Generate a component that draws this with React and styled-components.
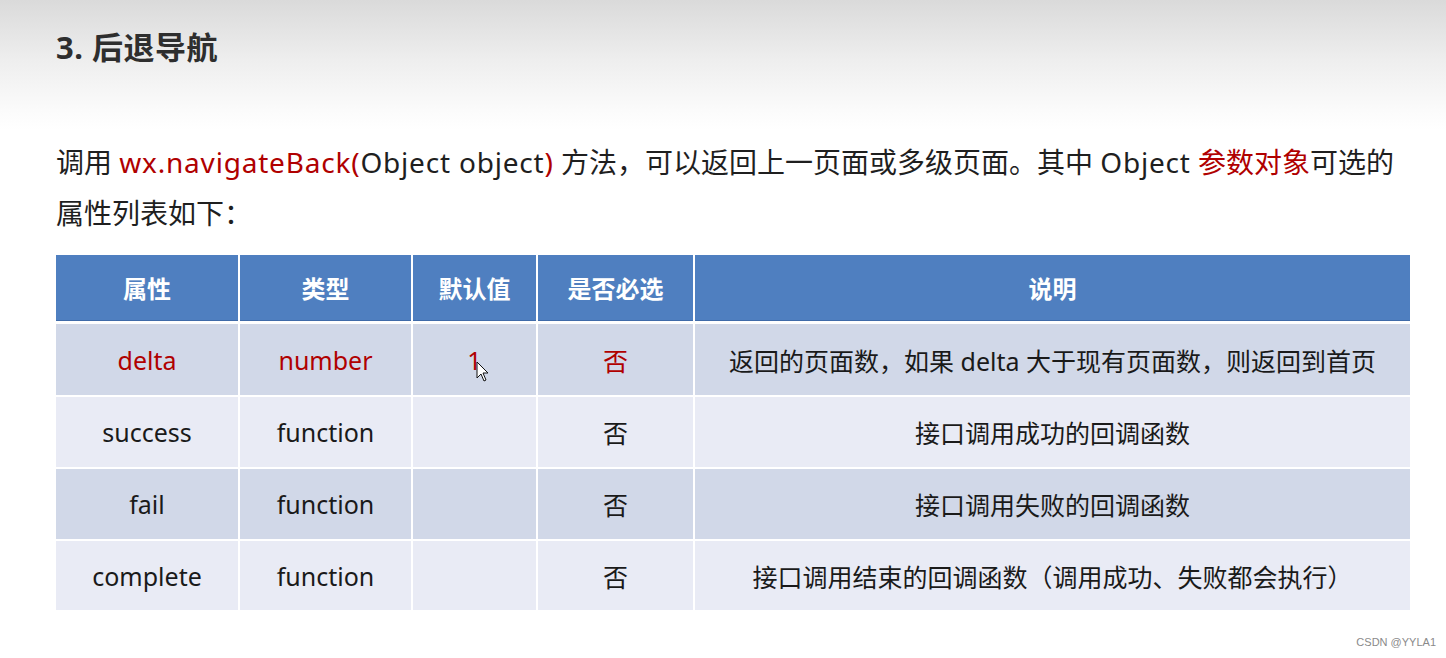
import React from "react";
import styled, { createGlobalStyle } from "styled-components";

const Global = createGlobalStyle`
  html, body { margin: 0; padding: 0; }
  body {
    width: 1446px;
    height: 658px;
    overflow: hidden;
    background: #ffffff;
    font-family: "Noto Sans", "Noto Sans CJK SC", sans-serif;
  }
`;

const Page = styled.div`
  position: relative;
  width: 1446px;
  height: 658px;
  box-sizing: border-box;
  background: linear-gradient(#dadada 0px, #eeeeee 60px, #fbfbfb 110px, #ffffff 130px);
  padding: 26px 36px 0 56px;
`;

const Title = styled.h1`
  margin: 0;
  font-family: "Noto Sans", "Noto Sans CJK SC", sans-serif;
  font-weight: 700;
  font-size: 31px;
  line-height: 42px;
  color: #2e2e2e;
  letter-spacing: 0.5px;
`;

const Para = styled.p`
  margin: 69px 0 0;
  font-family: "Noto Sans", "Noto Sans CJK SC", sans-serif;
  font-size: 28px;
  line-height: 51px;
  color: #1f1f1f;
  width: 1380px;
`;

const Latin = styled.span`
  letter-spacing: 0.8px;
  color: ${(p) => (p.$red ? "#b00000" : "inherit")};
`;

const Red = styled.span`
  color: #b00000;
`;

const Table = styled.div`
  margin-top: 16px;
  width: 1354px;
  display: grid;
  grid-template-columns: 182px 171px 123px 155px 1fr;
  grid-template-rows: 67px 71px 70px 70px 69px;
  column-gap: 2px;
  row-gap: 2px;
  background: #ffffff;
`;

const Head = styled.div`
  background: #4f7fc0;
  border-bottom: 1px solid #3f6aa8;
  color: #ffffff;
  font-weight: 700;
  font-size: 24px;
  display: flex;
  align-items: center;
  justify-content: center;
  margin-bottom: 1px;
`;

const Cell = styled.div`
  background: ${(p) => (p.$dark ? "#d1d8e8" : "#e9ebf5")};
  color: ${(p) => (p.$red ? "#b00000" : "#1a1a1a")};
  font-size: 25px;
  display: flex;
  align-items: center;
  justify-content: center;
  position: relative;
`;

const Cursor = styled.svg`
  position: absolute;
  left: 63px;
  top: 37px;
`;

const Watermark = styled.div`
  position: absolute;
  right: 10px;
  bottom: 10px;
  font-family: "Liberation Sans", sans-serif;
  font-size: 11px;
  color: #8a8a8a;
`;

const rows = [
  { name: "delta", type: "number", def: "1", req: "否", desc: "返回的页面数，如果 delta 大于现有页面数，则返回到首页", red: true },
  { name: "success", type: "function", def: "", req: "否", desc: "接口调用成功的回调函数" },
  { name: "fail", type: "function", def: "", req: "否", desc: "接口调用失败的回调函数" },
  { name: "complete", type: "function", def: "", req: "否", desc: "接口调用结束的回调函数（调用成功、失败都会执行）" },
];

export default function App() {
  return (
    <>
      <Global />
      <Page>
        <Title>3. 后退导航</Title>
        <Para>
          调用 <Latin $red>wx.navigateBack(</Latin><Latin>Object object</Latin><Latin $red>)</Latin> 方法，可以返回上一页面或多级页面。其中 <Latin>Object</Latin> <Red>参数对象</Red>可选的<br />属性列表如下：
        </Para>
        <Table>
          {["属性", "类型", "默认值", "是否必选", "说明"].map((h) => (
            <Head key={h}>{h}</Head>
          ))}
          {rows.map((r, i) => {
            const dark = i % 2 === 0;
            return (
              <React.Fragment key={r.name}>
                <Cell $dark={dark} $red={r.red}>{r.name}</Cell>
                <Cell $dark={dark} $red={r.red}>{r.type}</Cell>
                <Cell $dark={dark} $red={r.red}>
                  {r.def}
                  {i === 0 && (
                    <Cursor width="14" height="22" viewBox="0 0 14 22">
                      <path d="M1 1 L1 17 L5 13 L8 20 L10 19 L7 12 L12 12 Z" fill="#ffffff" stroke="#111" strokeWidth="1" strokeLinejoin="round" />
                    </Cursor>
                  )}
                </Cell>
                <Cell $dark={dark} $red={r.red}>{r.req}</Cell>
                <Cell $dark={dark}>{r.desc}</Cell>
              </React.Fragment>
            );
          })}
        </Table>
        <Watermark>CSDN @YYLA1</Watermark>
      </Page>
    </>
  );
}
